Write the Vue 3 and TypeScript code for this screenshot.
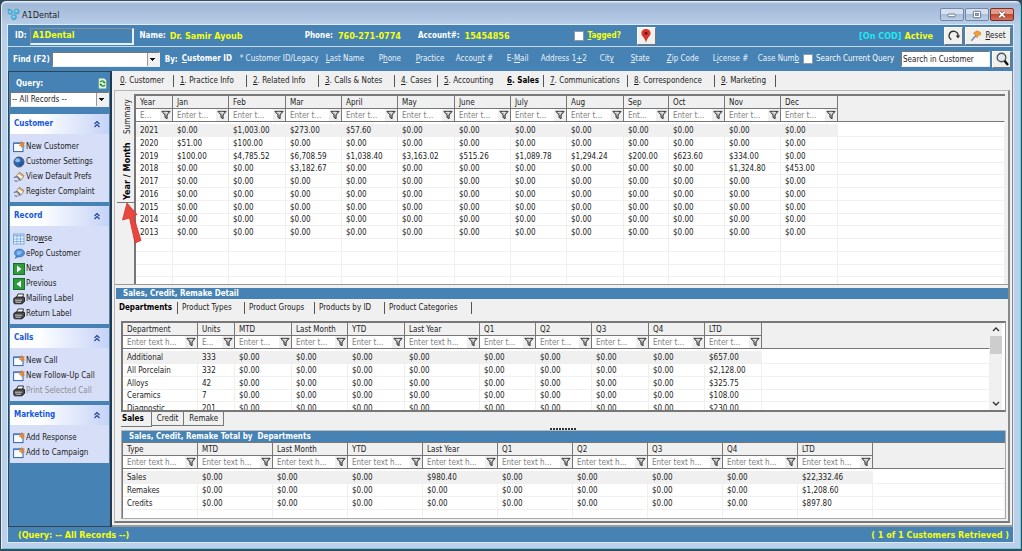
<script setup lang="ts">
import { ref } from 'vue'

type Accel = [string, string, string]
interface Column { label: string; hint: string; cls: string }
interface Item { text: string; icon: string; disabled?: boolean; accel?: Accel }
interface Panel { title: string; items: Item[] }

const customerId = ref('A1Dental')
const findText = ref('')
const query = ref('all')
const searchScope = ref('Search in Customer')

const searchFields: Accel[] = [
  ['* Customer ID/Legacy', '', ''],
  ['', 'L', 'ast Name'],
  ['P', 'h', 'one'],
  ['', 'P', 'ractice'],
  ['Accou', 'n', 't #'],
  ['E-', 'M', 'ail'],
  ['Address 1', '+', '2'],
  ['Cit', 'y', ''],
  ['', 'S', 'tate'],
  ['', 'Z', 'ip Code'],
  ['L', 'i', 'cense #'],
  ['Case Num', 'b', ''],
]

const tabs = ['Customer', 'Practice Info', 'Related Info', 'Calls & Notes', 'Cases', 'Accounting', 'Sales', 'Communications', 'Correspondence', 'Marketing']

const panels: Panel[] = [
  { title: 'Customer', items: [
    { text: 'New Customer', icon: 'new' },
    { text: 'Customer Settings', icon: 'globe' },
    { text: 'View Default Prefs', icon: 'prefs' },
    { text: 'Register Complaint', icon: 'prefs' },
  ] },
  { title: 'Record', items: [
    { text: 'Browse', icon: 'browse', accel: ['Bro', 'w', 'se'] },
    { text: 'ePop Customer', icon: 'chat' },
    { text: 'Next', icon: 'next' },
    { text: 'Previous', icon: 'prev' },
    { text: 'Mailing Label', icon: 'print' },
    { text: 'Return Label', icon: 'print' },
  ] },
  { title: 'Calls', items: [
    { text: 'New Call', icon: 'new' },
    { text: 'New Follow-Up Call', icon: 'new' },
    { text: 'Print Selected Call', icon: 'print', disabled: true },
  ] },
  { title: 'Marketing', items: [
    { text: 'Add Response', icon: 'new' },
    { text: 'Add to Campaign', icon: 'new' },
  ] },
]

const col = (label: string, cls: string, hint: string): Column => ({ label, cls, hint })
const month = (label: string, wide = false) => col(label, wide ? 'w57' : 'w56', 'Enter t...')

const yearColumns: Column[] = [
  col('Year', 'w37', 'E...'), month('Jan'), month('Feb', true), month('Mar'), month('April'), month('May', true),
  month('June'), month('July'), month('Aug', true), col('Sep', 'w45', 'Ent...'), month('Oct'), month('Nov'), month('Dec', true),
]
const zero = '$0.00'
const zeros = (n: number): string[] => Array(n).fill(zero)
const yearRows: string[][] = [
  ['2021', zero, '$1,003.00', '$273.00', '$57.60', ...zeros(8)],
  ['2020', '$51.00', '$100.00', ...zeros(10)],
  ['2019', '$100.00', '$4,785.52', '$6,708.59', '$1,038.40', '$3,163.02', '$515.26', '$1,089.78', '$1,294.24', '$200.00', '$623.60', '$334.00', zero],
  ['2018', zero, zero, '$3,182.67', ...zeros(7), '$1,324.80', '$453.00'],
  ...['2017', '2016', '2015', '2014', '2013'].map((y) => [y, ...zeros(12)]),
]

const deptColumns: Column[] = [
  col('Department', 'w75', 'Enter text h...'), col('Units', 'w37', 'E...'), month('MTD', true), month('Last Month'), month('YTD', true),
  col('Last Year', 'w75', 'Enter text h...'), month('Q1'), month('Q2'), month('Q3', true), month('Q4'), month('LTD', true),
]
const deptRows: string[][] = [
  ['Additional', '333', ...zeros(8), '$657.00'],
  ['All Porcelain', '332', ...zeros(8), '$2,128.00'],
  ['Alloys', '42', ...zeros(8), '$325.75'],
  ['Ceramics', '7', ...zeros(8), '$108.00'],
  ['Diagnostic', '201', ...zeros(8), '$230.00'],
]
const deptTabs = ['Departments', 'Product Types', 'Product Groups', 'Products by ID', 'Product Categories']

const totalColumns: Column[] = ['Type', 'MTD', 'Last Month', 'YTD', 'Last Year', 'Q1', 'Q2', 'Q3', 'Q4', 'LTD'].map((l) => col(l, 'w75', 'Enter text h...'))
const totalRows: string[][] = [
  ['Sales', ...zeros(3), '$980.40', ...zeros(4), '$22,332.46'],
  ['Remakes', ...zeros(8), '$1,208.60'],
  ['Credits', ...zeros(8), '$897.80'],
]

const grids = {
  year: { columns: yearColumns, rows: yearRows, blanks: 5 },
  dept: { columns: deptColumns, rows: deptRows, blanks: 0 },
  total: { columns: totalColumns, rows: totalRows, blanks: 2 },
}
</script>

<template>
  <div class="window">
    <svg class="defs" width="0" height="0" aria-hidden="true">
      <symbol id="funnel" viewBox="0 0 11 11">
        <path d="M1 1.5h9L6.700 5.400v4.200L4.400 8.200V5.400z" fill="#b0b0b0" stroke="#333" stroke-width="1.100" />
        <path d="M3 2.500h4L5.500 5" stroke="#fff" stroke-width="0.800" fill="none" />
      </symbol>
      <symbol id="chev" viewBox="0 0 8 8">
        <path d="M1.500 4 4 1.500 6.500 4M1.500 7 4 4.500 6.500 7" fill="none" stroke="#1c3f94" stroke-width="1.100" />
      </symbol>
      <symbol id="i-new" viewBox="0 0 12 12">
        <rect x="0.600" y="2" width="9.400" height="8.600" fill="#fdfeff" stroke="#2b62ae" />
        <path d="M0.600 2.400h7" stroke="#3f7fd0" stroke-width="1.400" />
        <path d="M8.800 0.300l0.800 1.900 2-.3-1.200 1.700 1.300 1.600-2.200-.2-.9 1.700-.7-1.900-2-.3 1.500-1.200-.8-1.900 1.800.6z" fill="#ef8b2c" stroke="#c65f12" stroke-width="0.300" />
      </symbol>
      <symbol id="i-globe" viewBox="0 0 12 12">
        <circle cx="6" cy="6" r="5" fill="#2f66b4" stroke="#48586e" />
        <ellipse cx="4.600" cy="4.300" rx="2.400" ry="2" fill="#8fc0ee" />
        <path d="M6 9c2 0 3-1 3.500-3" stroke="#123c7c" fill="none" />
      </symbol>
      <symbol id="i-prefs" viewBox="0 0 12 12">
        <path d="M3 5.500 6.500 1.200 11 4.600 8 9.500 5.500 8z" fill="#f8efe2" stroke="#8c7b68" stroke-width="0.800" />
        <path d="M6 2 10.300 5.300" stroke="#d9944a" stroke-width="1.300" />
        <path d="M0.800 6.500l3.500-1 2.700 2.500-1.500 1.500M1.500 9.800l3 .4" stroke="#5b6474" stroke-width="1.100" fill="none" />
      </symbol>
      <symbol id="i-browse" viewBox="0 0 12 12">
        <rect x="0.500" y="1" width="10.500" height="10" fill="#eef6ff" stroke="#7fa9d6" />
        <path d="M1 2.500h10" stroke="#8fbdec" stroke-width="2" />
        <path d="M1 6h10M1 8.500h10M4 2v9M7.500 2v9" stroke="#6ea6e0" stroke-width="0.800" />
      </symbol>
      <symbol id="i-chat" viewBox="0 0 12 12">
        <ellipse cx="6.500" cy="5" rx="5" ry="3.900" fill="#4f93dc" stroke="#2d6bb4" stroke-width="0.700" />
        <path d="M3 7.500 1.500 11 6.500 8.600z" fill="#3d7fc9" />
        <path d="M3.800 4h5M3.800 5.800h4" stroke="#d7eaff" stroke-width="0.800" />
      </symbol>
      <symbol id="i-next" viewBox="0 0 12 12">
        <rect x="0.500" y="0.500" width="11" height="11" fill="#2f9c3c" stroke="#17702a" />
        <path d="M4 2.500v7L8.500 6z" fill="#fff" />
      </symbol>
      <symbol id="i-prev" viewBox="0 0 12 12">
        <rect x="0.500" y="0.500" width="11" height="11" fill="#2f9c3c" stroke="#17702a" />
        <path d="M8 2.500v7L3.500 6z" fill="#fff" />
      </symbol>
      <symbol id="i-print" viewBox="0 0 12 12">
        <path d="M3.500 4.500 5 1h5.500L9.500 4.500z" fill="#fff" stroke="#222" stroke-width="0.900" />
        <path d="M0.800 5.500 3 4h8l.5 1v3.500L9 10.800H1.500l-.7-1z" fill="#4b4b4b" stroke="#161616" stroke-width="0.900" />
        <path d="M2 7.200h7M2.500 9.200h5.500" stroke="#d8d8d8" stroke-width="0.900" />
      </symbol>
    </svg>

    <header class="titlebar">
      <svg class="app-icon" viewBox="0 0 14 14" aria-hidden="true">
        <g fill="#4fb4d8" stroke="#2f97c0" stroke-width="0.500">
          <circle cx="3.600" cy="4.500" r="2.500" /><circle cx="10.400" cy="3.800" r="2.800" /><circle cx="7.500" cy="10" r="2.800" /><circle cx="2" cy="2" r="1.100" />
        </g>
        <g fill="#a9def0"><circle cx="3.200" cy="4" r="1" /><circle cx="10" cy="3.200" r="1.100" /><circle cx="7.200" cy="9.400" r="1.100" /></g>
      </svg>
      <span class="title">A1Dental</span>
      <button class="cap" aria-label="Minimize"><svg viewBox="0 0 22 12"><rect x="6.500" y="5.500" width="8" height="3" rx="1" fill="#fff" stroke="#596a80" /></svg></button>
      <button class="cap" aria-label="Maximize"><svg viewBox="0 0 22 12"><rect x="7" y="2.500" width="8" height="7" rx="1" fill="#fff" stroke="#596a80" /><rect x="9.500" y="5" width="3" height="2" fill="#9db4d0" stroke="#596a80" stroke-width="0.800" /></svg></button>
      <button class="cap close" aria-label="Close"><svg viewBox="0 0 22 12"><path d="M8 3l6 6M14 3l-6 6" stroke="#5c2a26" stroke-width="3.400" /><path d="M8 3l6 6M14 3l-6 6" stroke="#fff" stroke-width="2" /></svg></button>
    </header>

    <div class="client">
      <section class="bar id-bar">
        <label class="lbl" for="cid">ID:</label>
        <input id="cid" v-model="customerId" class="id-box">
        <span class="lbl">Name:</span><span class="val name">Dr. Samir Ayoub</span>
        <span class="lbl">Phone:</span><span class="val phone">760-271-0774</span>
        <span class="lbl">Account#:</span><span class="val account">15454856</span>
        <input id="tagged" class="tick" type="checkbox">
        <label class="tagged" for="tagged"><u>T</u>agged?</label>
        <button class="tool" aria-label="Map">
          <svg viewBox="0 0 18 18"><path d="M9 1c3.200 0 5.200 2.100 5.200 5C14.200 9.600 9.700 11 9 17 8.300 11 3.800 9.600 3.800 6 3.800 3.100 5.800 1 9 1z" fill="#d8352c" /><circle cx="9" cy="5.800" r="1.700" fill="#6f1512" /></svg>
        </button>
        <span class="cod">[On COD]</span><span class="active-state">Active</span>
        <button class="tool" aria-label="Refresh">
          <svg viewBox="0 0 18 18"><path d="M6 13A5 5 0 1 1 13.500 9" fill="none" stroke="#333" stroke-width="1.500" /><path d="M11 8.500h5l-2.500 3.200z" fill="#333" /></svg>
        </button>
        <button class="tool reset">
          <svg viewBox="0 0 14 14"><path d="M1.500 12.500 7 6.500" stroke="#7a8ba8" stroke-width="1.800" /><path d="M4 3.500 8 1l4 1.500.5 3-3 1L8.500 9 6.500 6.500z" fill="#f0a03a" stroke="#c8731a" stroke-width="0.600" /></svg>
          <span><u>R</u>eset</span>
        </button>
      </section>

      <section class="bar find-bar">
        <label class="lbl" for="find">Find (F2)</label>
        <select id="find" v-model="findText" class="drop find-box"><option value="" /></select>
        <span class="lbl by">By:</span>
        <button class="field current"><u>C</u>ustomer ID</button>
        <div class="fields">
          <button v-for="(f, i) in searchFields" :key="i" class="field">{{ f[0] }}<u>{{ f[1] }}</u>{{ f[2] }}</button>
        </div>
        <input id="cur" class="tick" type="checkbox">
        <label class="cur-label" for="cur">Search Current Query</label>
        <input v-model="searchScope" class="scope" aria-label="Search scope">
        <button class="tool search" aria-label="Search">
          <svg viewBox="0 0 16 16"><circle cx="7.500" cy="6.500" r="4.300" fill="#dfe9f2" stroke="#555" stroke-width="1.400" /><path d="M10.500 9.800 14 14" stroke="#111" stroke-width="2.400" /></svg>
        </button>
      </section>

      <div class="body">
        <aside class="side">
          <div class="query-head">
            <label for="query">Query:</label>
            <svg viewBox="0 0 10 12" aria-hidden="true"><path d="M1 .5h6l2 2v9H1z" fill="#e6f5e4" stroke="#9cc79a" stroke-width="0.600" /><path d="M2.500 4.500c1-2.200 4.500-1.800 4.500.3M7.500 7.500c-1 2.200-4.500 1.800-4.500-.3" fill="none" stroke="#1f8f2d" stroke-width="1.500" /><path d="M5.200 4.200h3.300L7 6.300zM1.500 7.800h3.300L3.200 5.700z" fill="#1f8f2d" /></svg>
          </div>
          <select id="query" v-model="query" class="drop query"><option value="all">-- All Records --</option></select>
          <section v-for="p in panels" :key="p.title" class="panel">
            <h2>{{ p.title }}<svg viewBox="0 0 8 8" aria-hidden="true"><use href="#chev" /></svg></h2>
            <ul>
              <li v-for="it in p.items" :key="it.text">
                <button class="item" :disabled="it.disabled">
                  <svg viewBox="0 0 12 12" aria-hidden="true"><use :href="'#i-' + it.icon" /></svg>
                  <span v-if="it.accel">{{ it.accel[0] }}<u>{{ it.accel[1] }}</u>{{ it.accel[2] }}</span>
                  <span v-else>{{ it.text }}</span>
                </button>
              </li>
            </ul>
          </section>
        </aside>

        <main class="main">
          <nav class="tabs">
            <button v-for="(t, i) in tabs" :key="t" :class="{ on: t === 'Sales', plain: t === 'Accounting' }"><u>{{ i }}</u>. {{ t }}</button>
          </nav>

          <div class="sheet">
            <div class="year-area">
              <nav class="vtabs">
                <button>Summary</button>
                <button class="on">Year / Month</button>
                <svg class="pointer" viewBox="0 0 22 44" aria-hidden="true"><path d="M5 1 15 12.500 11.500 14 19 38.500 13 41 7.500 16 0.500 18z" fill="#e8473f" stroke="#cf362f" stroke-width="0.800" /></svg>
              </nav>
              <div class="grid-box">
                <table class="grid">
                  <colgroup><col v-for="c in grids.year.columns" :key="c.label" :class="c.cls"><col></colgroup>
                  <thead>
                    <tr><th v-for="c in grids.year.columns" :key="c.label">{{ c.label }}</th><td class="rest" /></tr>
                    <tr class="filters"><td v-for="c in grids.year.columns" :key="c.label"><div class="filter"><input :placeholder="c.hint" :aria-label="c.label + ' filter'"><button :aria-label="c.label + ' filter options'"><svg viewBox="0 0 11 11"><use href="#funnel" /></svg></button></div></td><td class="rest" /></tr>
                  </thead>
                  <tbody>
                    <tr v-for="r in grids.year.rows" :key="r[0]"><td v-for="(v, i) in r" :key="i">{{ v }}</td><td class="rest" /></tr>
                    <tr v-for="n in grids.year.blanks" :key="'b' + n"><td v-for="c in grids.year.columns" :key="c.label" /><td class="rest" /></tr>
                  </tbody>
                </table>
              </div>
            </div>

            <section class="detail">
              <h3>Sales, Credit, Remake Detail</h3>
              <nav class="tabs dept-tabs">
                <button v-for="t in deptTabs" :key="t" :class="{ on: t === 'Departments' }">{{ t }}</button>
              </nav>
              <div class="dept-frame">
                <div class="grid-box dept-grid">
                  <table class="grid">
                    <colgroup><col v-for="c in grids.dept.columns" :key="c.label" :class="c.cls"><col></colgroup>
                    <thead>
                      <tr><th v-for="c in grids.dept.columns" :key="c.label">{{ c.label }}</th><td class="rest" /></tr>
                      <tr class="filters"><td v-for="c in grids.dept.columns" :key="c.label"><div class="filter"><input :placeholder="c.hint" :aria-label="c.label + ' filter'"><button :aria-label="c.label + ' filter options'"><svg viewBox="0 0 11 11"><use href="#funnel" /></svg></button></div></td><td class="rest" /></tr>
                    </thead>
                    <tbody>
                      <tr v-for="r in grids.dept.rows" :key="r[0]"><td v-for="(v, i) in r" :key="i">{{ v }}</td><td class="rest" /></tr>
                    </tbody>
                  </table>
                  <div class="scroll" aria-hidden="true">
                    <svg viewBox="0 0 12 12"><path d="M3 7.500 6 4.500 9 7.500" /></svg>
                    <div class="thumb" />
                    <svg viewBox="0 0 12 12"><path d="M3 4.500 6 7.500 9 4.500" /></svg>
                  </div>
                </div>
                <nav class="foot-tabs">
                  <button class="on">Sales</button><button>Credit</button><button>Remake</button>
                </nav>
                <div class="splitter"><i /></div>
                <div class="total">
                  <h3>Sales, Credit, Remake Total by&nbsp; Departments</h3>
                  <div class="grid-box total-grid">
                    <table class="grid">
                      <colgroup><col v-for="c in grids.total.columns" :key="c.label" :class="c.cls"><col></colgroup>
                      <thead>
                        <tr><th v-for="c in grids.total.columns" :key="c.label">{{ c.label }}</th><td class="rest" /></tr>
                        <tr class="filters"><td v-for="c in grids.total.columns" :key="c.label"><div class="filter"><input :placeholder="c.hint" :aria-label="c.label + ' filter'"><button :aria-label="c.label + ' filter options'"><svg viewBox="0 0 11 11"><use href="#funnel" /></svg></button></div></td><td class="rest" /></tr>
                      </thead>
                      <tbody>
                        <tr v-for="r in grids.total.rows" :key="r[0]"><td v-for="(v, i) in r" :key="i">{{ v }}</td><td class="rest" /></tr>
                        <tr v-for="n in grids.total.blanks" :key="'b' + n"><td v-for="c in grids.total.columns" :key="c.label" /><td class="rest" /></tr>
                      </tbody>
                    </table>
                  </div>
                </div>
              </div>
            </section>
          </div>
        </main>
      </div>

      <footer class="status"><span>(Query: -- All Records --)</span><span>( 1 of 1 Customers Retrieved )</span></footer>
    </div>
  </div>
</template>

<style>
body { margin: 0; background: #2b4a5c; }
</style>

<style scoped>
* { box-sizing: border-box; }
.window {
  display: flex;
  flex-direction: column;
  height: 100vh;
  min-height: 540px;
  padding: 0 7px 6px 6px;
  overflow: hidden;
  border: 1px solid #3a4a58;
  border-width: 1px 1px 2px;
  border-radius: 6px 6px 0 0;
  background: linear-gradient(#e3edf8 0, #9fb6d6 3px, #b9cee8 24px, #b9d1ea 40px);
  box-shadow: inset 1px 1px 0 #e4eef8, inset -1px -1px 0 #58d4e8;
  color: #222;
  font: 8px/12px "DejaVu Sans Condensed", "DejaVu Sans", sans-serif;
}
.defs { position: absolute; }
button, input, select { margin: 0; padding: 0; border: 0; background: none; color: inherit; font: inherit; border-radius: 0; }
button { white-space: nowrap; }
svg { flex: none; }

.titlebar { display: flex; align-items: center; flex: none; height: 23px; padding-top: 4px; }
.app-icon { width: 13px; height: 13px; }
.title { flex: 1; margin-left: 2px; font-size: 9px; }
.cap { width: 24px; height: 13px; margin-left: 1px; border: 1px solid #7388a4; border-radius: 2px; background: linear-gradient(#d5e1f0 45%, #a9bfda 50%, #bdd0e6); }
.cap.close { border-color: #7b2c25; background: linear-gradient(#e29c8c 45%, #c24a32 50%, #d4715a); }
.cap svg { display: block; width: 22px; height: 11px; }

.client { display: flex; flex-direction: column; flex: 1; min-height: 0; border: 1px solid #dfeaf5; background: #4682b4; }
.bar { display: flex; align-items: center; flex: none; color: #fff; }
.id-bar { height: 22px; padding: 1px 2px 0 7px; border-bottom: 1px solid #c6dbee; }
.lbl { font-weight: bold; font-size: 8px; }
.val, .cod, .active-state { font-weight: bold; font-size: 9px; color: #f4ff10; }
.id-box { width: 104px; height: 17px; margin: 0 6px 0 3px; padding: 0 2px 2px; border: 1px solid #8a8f94; border-right: 2px solid #e8f0f8; border-bottom: 2px solid #e8f0f8; color: #f4ff10; font-weight: bold; font-size: 9px; }
.name { width: 135px; margin-left: 4px; }
.phone { width: 80px; margin-left: 5px; }
.account { width: 109px; margin-left: 5px; }
.tick { appearance: none; flex: none; width: 10px; height: 10px; border: 1px solid #8d9aa8; background: #fff; }
.tagged { margin-left: 4px; width: 49px; font-weight: bold; color: #f4ff10; }
.tool { display: flex; align-items: center; justify-content: center; flex: none; width: 19px; height: 18px; border: 1px solid #fff; border-right-color: #777; border-bottom-color: #777; background: #f0f0ef; color: #222; }
.tool svg { width: 16px; height: 16px; }
.cod { margin-left: auto; color: #22e8f0; }
.active-state { margin: 0 11px 0 3px; }
.reset { width: 46px; margin-left: 2px; gap: 3px; }
.reset svg { width: 12px; height: 12px; }

.find-bar { height: 24px; padding: 0 2px 0 5px; }
.find-bar .lbl { padding-top: 1px; }
.drop {
  appearance: none;
  border: 1px solid #777;
  border-right-color: #eee;
  border-bottom-color: #eee;
  background:
    linear-gradient(#111, #111) right 4px top 5px / 5px 1px no-repeat,
    linear-gradient(#111, #111) right 5px top 6px / 3px 1px no-repeat,
    linear-gradient(#111, #111) right 6px top 7px / 1px 1px no-repeat,
    linear-gradient(90deg, #999 1px, #f0f0f0 1px) right / 12px 100% no-repeat,
    #fff;
  color: #222;
}
.find-box { width: 108px; height: 15px; margin-left: 2px; }
.by { margin-left: 5px; }
.field { color: #eaf3fb; }
.current { margin-left: 4px; width: 58px; text-align: left; font-weight: bold; color: #fff; }
.fields { display: grid; grid-template-columns: 86px 53px 37px 40px 51px 34px 59px 31px 36px 46px 45px 39px; flex: 1; min-width: 0; }
.fields .field { text-align: left; }
.cur-label { margin-left: 3px; width: 85px; white-space: nowrap; }
.scope { width: 89px; height: 16px; padding: 0 1px; border: 1px solid #777; border-right-color: #eee; border-bottom-color: #eee; background: #fff; color: #222; }
.search { height: 17px; margin-left: 2px; }

.body { display: flex; flex: 1; min-height: 0; }
.side { display: flex; flex-direction: column; flex: none; width: 104px; padding: 1px 1px 0 1px; border: 1px solid #2d4459; border-right: 2px solid #24394c; }
.query-head { display: flex; align-items: center; justify-content: space-between; flex: none; height: 19px; padding: 2px 2px 0 6px; color: #fff; font-weight: bold; }
.query-head svg { width: 9px; height: 11px; }
.query { height: 15px; margin-bottom: 7px; padding-left: 1px; flex: none; }
.panel { flex: none; margin-bottom: 4px; background: #d6dff7; }
.panel h2 { display: flex; align-items: center; justify-content: space-between; height: 20px; margin: 0; padding: 0 8px 0 4px; border-radius: 3px 3px 0 0; background: linear-gradient(90deg, #fdfeff 30%, #c6d3f7); color: #1557e0; font-size: 8px; }
.panel h2 svg { width: 8px; height: 8px; }
.panel ul { margin: 0; padding: 5px 0 3px 3px; list-style: none; }
.item { display: flex; align-items: center; gap: 1px; width: 100%; height: 15px; }
.item:disabled { color: #8c8c94; }
.item svg { width: 12px; height: 12px; }

.main { display: flex; flex-direction: column; flex: 1; min-width: 0; padding: 0 2px 2px 2px; border-right: 1px solid #888; border-bottom: 2px solid #9a9a9a; background: #f0f0f0; }
.tabs { display: grid; flex: none; grid-template-columns: 60px 73px 72px 76px 43px 63px 43px 84px 87px 61px; align-items: center; height: 19px; }
.tabs button { height: 12px; padding-left: 6px; border-right: 1px solid #555; text-align: left; line-height: 12px; }
.tabs .on { font-weight: bold; color: #000; }
.tabs .plain { border-right-color: transparent; }
.sheet { display: flex; flex-direction: column; flex: 1; min-height: 0; border: 1px solid #b5b5b5; border-right: 2px solid #888; border-bottom: 2px solid #777; }
.year-area { display: flex; flex: 1; min-height: 0; padding: 3px 3px 0 2px; border-bottom: 1px solid #999; }
.vtabs { position: relative; display: flex; flex-direction: column; flex: none; width: 17px; }
.vtabs button { writing-mode: vertical-rl; transform: rotate(180deg); width: 17px; height: 46px; padding-right: 4px; line-height: 13px; }
.vtabs .on { height: 63px; border-top: 1px solid #777; font-weight: bold; font-size: 9px; color: #000; }
.pointer { position: absolute; left: 5px; top: 108px; width: 22px; height: 44px; z-index: 1; }
.grid-box { position: relative; flex: 1; min-width: 0; overflow: hidden; border-top: 2px solid #777; border-left: 2px solid #777; background: #fff; }
.grid { width: 100%; table-layout: fixed; border-collapse: separate; border-spacing: 0; }
.w37 { width: 37px; }
.w45 { width: 45px; }
.w56 { width: 56px; }
.w57 { width: 57px; }
.w75 { width: 75px; }
.grid th, .grid td { height: 13px; padding: 0 0 0 4px; border-right: 1px solid #f0f0f0; border-bottom: 1px solid #f0f0f0; text-align: left; font-weight: normal; line-height: 11px; white-space: nowrap; }
.grid th { border-right-color: #777; border-bottom-color: #777; background: #f0f0f0; }
.grid thead .rest { border-color: #f0f0f0; background: #f0f0f0; }
.grid .filters td { height: 13px; padding: 0 0 0 4px; border-right-color: #777; border-bottom-color: #777; }
.grid .filters .rest { border-right-color: #f0f0f0; }
.filter { display: flex; height: 12px; }
.filter input { flex: 1; width: 0; min-width: 0; color: #222; }
.filter input::placeholder { color: #808080; opacity: 1; }
.filter button { display: flex; align-items: center; justify-content: center; width: 12px; background: #efefef; }
.filter svg { width: 10px; height: 10px; }
.grid tbody::before { content: ""; display: block; height: 2px; }
.grid tbody tr:nth-child(4n) td { height: 12px; }
.grid tbody tr:first-child td:not(.rest) { background: #f0f0f0; }

.detail { flex: none; padding: 3px 0 0 1px; }
h3 { height: 11px; margin: 0; padding-left: 7px; background: #4682b4; color: #fff; font-size: 8px; line-height: 11px; }
.dept-tabs { grid-template-columns: 62px 67px 70px 70px 87px; height: 18px; padding-left: 0; }
.dept-tabs button { padding-left: 4px; }
.dept-tabs button.on { padding-left: 3px; }
.dept-frame { padding: 4px 2px 2px 5px; }
.dept-grid { height: 91px; padding-right: 15px; border-bottom: 2px solid #777; border-right: 1px solid #999; }
.scroll { position: absolute; top: 0; right: 3px; bottom: 0; display: flex; flex-direction: column; width: 12px; background: #f0f0f0; }
.scroll svg { width: 12px; height: 13px; fill: none; stroke: #333; stroke-width: 1.400; }
.scroll .thumb { height: 18px; margin-bottom: auto; background: #cdcdcd; }
.foot-tabs { display: flex; height: 15px; }
.foot-tabs button { height: 14px; padding: 0 5px; border: 1px solid #777; border-top: 0; border-left: 0; }
.foot-tabs .on { height: 15px; padding: 0 7px 0 1px; font-weight: bold; color: #000; }
.splitter { display: flex; justify-content: center; height: 4px; padding-top: 1px; border-bottom: 1px solid #bbb; }
.splitter i { width: 27px; height: 2px; background: repeating-linear-gradient(90deg, #333 0 2px, transparent 2px 3px); }
.total { border: 1px solid #aaa; border-top: 0; }
.total-grid { height: 76px; border-top-width: 1px; border-left-width: 1px; }

.status { display: flex; align-items: center; justify-content: space-between; flex: none; height: 15px; padding: 0 4px 0 10px; color: #f4ff10; font-weight: bold; font-size: 9px; }
</style>
